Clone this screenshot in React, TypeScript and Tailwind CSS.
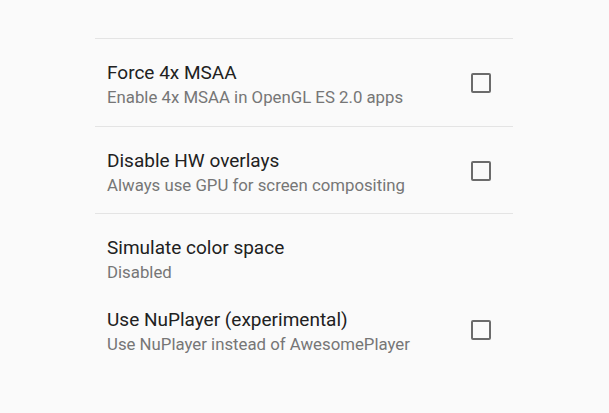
import React from "react";

type Item = { title: string; summary: string; checkbox: boolean; divider: boolean; h: string };

const items: Item[] = [
  { title: "Force 4x MSAA", summary: "Enable 4x MSAA in OpenGL ES 2.0 apps", checkbox: true, divider: true, h: "h-[88px]" },
  { title: "Disable HW overlays", summary: "Always use GPU for screen compositing", checkbox: true, divider: true, h: "h-[87px]" },
  { title: "Simulate color space", summary: "Disabled", checkbox: false, divider: false, h: "h-[72px]" },
  { title: "Use NuPlayer (experimental)", summary: "Use NuPlayer instead of AwesomePlayer", checkbox: true, divider: false, h: "h-[88px]" },
];

export default function App() {
  return (
    <div className="w-[609px] h-[413px] bg-[#fafafa] overflow-hidden" style={{ fontFamily: "Roboto, 'Noto Sans', sans-serif" }}>
      <div className="h-[39px] ml-[95px] w-[418px] border-b border-[#e4e4e4]" />
      <div className="ml-[95px] w-[418px]">
        {items.map((it) => (
          <div key={it.title} className={`${it.h} flex items-start ${it.divider ? "border-b border-[#e4e4e4]" : ""}`}>
            <div className="flex-1 pl-[12px] pt-[22px]">
              <div className="text-[19px] leading-[24px] text-[#212121]">{it.title}</div>
              <div className="text-[16.8px] leading-[24px] text-[#767676]">{it.summary}</div>
            </div>
            {it.checkbox && (
              <div className="w-[20px] h-[20px] mt-[34px] mr-[22px] border-2 border-[#6b6b6b] rounded-[2px]" />
            )}
          </div>
        ))}
      </div>
    </div>
  );
}
